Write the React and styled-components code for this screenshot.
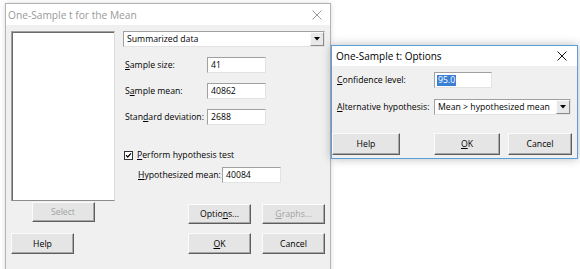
import React from "react";
import styled, { createGlobalStyle } from "styled-components";

const GlobalStyle = createGlobalStyle`
  html, body {
    margin: 0;
    padding: 0;
    background: #ffffff;
  }
  body {
    font-family: "Open Sans", "Liberation Sans", sans-serif;
    font-size: 8.7px;
    color: #000;
  }
`;

const Desktop = styled.div`
  position: relative;
  width: 580px;
  height: 269px;
  overflow: hidden;
  background: #ffffff;
`;

// a window sitting on the desktop
const Window = styled.div`
  position: absolute;
  left: ${(p) => p.$x}px;
  top: ${(p) => p.$y}px;
  width: ${(p) => p.$w}px;
  height: ${(p) => p.$h}px;
  box-sizing: border-box;
  display: flex;
  flex-direction: column;
  border: 1px solid ${(p) => (p.$active ? "#5a9ee0" : "#b4b4b4")};
  background: #f0f0f0;
  box-shadow: 0 0 ${(p) => (p.$active ? 9 : 5)}px rgba(0, 0, 0, ${(p) => (p.$active ? 0.28 : 0.15)});
`;

const TitleBar = styled.div`
  height: ${(p) => p.$h}px;
  flex: none;
  display: flex;
  align-items: center;
  justify-content: space-between;
  padding: 0 ${(p) => p.$pr}px 0 ${(p) => p.$pl}px;
  background: #ffffff;
  color: ${(p) => (p.$active ? "#000" : "#9a9a9a")};
  font-size: ${(p) => p.$size}px;
`;

const CloseX = ({ color }) => (
  <svg width="10" height="10" viewBox="0 0 10 10">
    <path d="M0.5 0.5 L9.5 9.5 M9.5 0.5 L0.5 9.5" stroke={color} strokeWidth="1" fill="none" />
  </svg>
);

const MainBody = styled.div`
  flex: 1;
  display: flex;
  flex-direction: column;
  padding: 6px 5px 0 5px;
`;

const TopArea = styled.div`
  display: flex;
  gap: 8px;
`;

const LeftCol = styled.div`
  width: 104px;
  display: flex;
  flex-direction: column;
`;

const ListBox = styled.div`
  height: 170px;
  box-sizing: border-box;
  background: #ffffff;
  border: 1px solid;
  border-color: #a0a0a0 #dcdcdc #8c8c8c #a0a0a0;
  box-shadow: inset 1px 1px 0 #6b6b6b;
`;

const RightCol = styled.div`
  width: 202px;
  display: flex;
  flex-direction: column;
`;

const Combo = styled.div`
  width: ${(p) => p.$w}px;
  height: 16px;
  box-sizing: border-box;
  display: flex;
  align-items: center;
  justify-content: space-between;
  background: #ffffff;
  border: 1px solid;
  border-color: #a0a0a0 #e3e3e3 #e3e3e3 #a0a0a0;
  padding-left: 3px;
`;

const ComboArrow = styled.span`
  width: 14px;
  height: 14px;
  box-sizing: border-box;
  display: flex;
  align-items: center;
  justify-content: center;
  background: #e8e8e8;
  border: 1px solid;
  border-color: #fafafa #8a8a8a #8a8a8a #fafafa;
`;

const Caret = () => (
  <svg width="6" height="4" viewBox="0 0 6 4">
    <path d="M0 0 H6 L3 3.5 Z" fill="#000" />
  </svg>
);

const FieldRow = styled.div`
  display: flex;
  align-items: center;
  margin-top: ${(p) => p.$mt || 0}px;
  padding-left: ${(p) => p.$pl || 0}px;
`;

const Label = styled.span`
  width: ${(p) => p.$w}px;
  flex: none;
  white-space: nowrap;
`;

const TextBox = styled.div`
  width: ${(p) => p.$w}px;
  height: 16px;
  box-sizing: border-box;
  display: flex;
  align-items: center;
  padding-left: ${(p) => p.$pl || 3}px;
  background: #ffffff;
  border: 1px solid;
  border-color: #a0a0a0 #e3e3e3 #e3e3e3 #a0a0a0;
`;

const Selected = styled.span`
  background: #3a7fd6;
  color: #ffffff;
  padding: 0 1px;
  line-height: 11px;
`;

const Key = styled.u`
  text-decoration-thickness: 1px;
  text-underline-offset: 1px;
`;

const CheckRow = styled.label`
  display: flex;
  align-items: center;
  gap: 4px;
  margin-top: ${(p) => p.$mt}px;
  height: 12px;
  padding-left: 1px;
`;

const CheckBox = () => (
  <svg width="9" height="9" viewBox="0 0 9 9">
    <rect x="0.5" y="0.5" width="8" height="8" fill="#fff" stroke="#333" />
    <path d="M2 4.2 L3.7 6 L7 2.4" stroke="#000" strokeWidth="1.2" fill="none" />
  </svg>
);

const ButtonRow = styled.div`
  display: flex;
  justify-content: ${(p) => p.$justify || "space-between"};
  margin-top: ${(p) => p.$mt || 0}px;
  padding-right: ${(p) => p.$pr || 0}px;
`;

const ButtonGroup = styled.div`
  display: flex;
  gap: ${(p) => p.$gap}px;
`;

const Button = styled.div`
  width: ${(p) => p.$w}px;
  height: ${(p) => p.$h}px;
  box-sizing: border-box;
  display: flex;
  align-items: center;
  justify-content: center;
  align-self: ${(p) => p.$self || "auto"};
  margin-top: ${(p) => p.$mt || 0}px;
  background: #e5e5e5;
  color: ${(p) => (p.$disabled ? "#a3a3a3" : "#000")};
  border: 1px solid;
  border-color: #fbfbfb #5e5e5e #5e5e5e #fbfbfb;
  box-shadow: inset -1px -1px 0 #a8a8a8;
`;

const OptionsBody = styled.div`
  flex: 1;
  display: flex;
  flex-direction: column;
  padding-top: 6px;
`;

export default function App() {
  return (
    <>
      <GlobalStyle />
      <Desktop>
        <Window $x={5} $y={3} $w={326} $h={290}>
          <TitleBar $h={21} $pl={2} $pr={8} $size={10.2}>
            <span>One-Sample t for the Mean</span>
            <CloseX color="#9a9a9a" />
          </TitleBar>
          <MainBody>
            <TopArea>
              <LeftCol>
                <ListBox />
                <Button $w={63} $h={20} $mt={1} $self="center" $disabled>
                  Select
                </Button>
              </LeftCol>
              <RightCol>
                <Combo $w={202}>
                  Summarized data
                  <ComboArrow>
                    <Caret />
                  </ComboArrow>
                </Combo>
                <FieldRow $mt={10} $pl={2}>
                  <Label $w={82}>
                    <Key>S</Key>ample size:
                  </Label>
                  <TextBox $w={59}>41</TextBox>
                </FieldRow>
                <FieldRow $mt={10} $pl={2}>
                  <Label $w={82}>
                    S<Key>a</Key>mple mean:
                  </Label>
                  <TextBox $w={59}>40862</TextBox>
                </FieldRow>
                <FieldRow $mt={10} $pl={2}>
                  <Label $w={82}>
                    Stan<Key>d</Key>ard deviation:
                  </Label>
                  <TextBox $w={59}>2688</TextBox>
                </FieldRow>
                <CheckRow $mt={24}>
                  <CheckBox />
                  <span>
                    <Key>P</Key>erform hypothesis test
                  </span>
                </CheckRow>
                <FieldRow $mt={6} $pl={15}>
                  <Label $w={84}>
                    <Key>H</Key>ypothesized mean:
                  </Label>
                  <TextBox $w={59}>40084</TextBox>
                </FieldRow>
                <ButtonRow $mt={21} $justify="flex-end">
                  <ButtonGroup $gap={11}>
                    <Button $w={63} $h={20}>
                      Optio<Key>n</Key>s...
                    </Button>
                    <Button $w={63} $h={20} $disabled>
                      <Key>G</Key>raphs...
                    </Button>
                  </ButtonGroup>
                </ButtonRow>
              </RightCol>
            </TopArea>
            <ButtonRow $mt={9}>
              <Button $w={63} $h={21}>
                Help
              </Button>
              <ButtonGroup $gap={11}>
                <Button $w={63} $h={21}>
                  <Key>O</Key>K
                </Button>
                <Button $w={63} $h={21}>
                  Cancel
                </Button>
              </ButtonGroup>
            </ButtonRow>
          </MainBody>
        </Window>

        <Window $x={331} $y={45} $w={247} $h={114} $active>
          <TitleBar $h={20} $pl={4} $pr={10} $size={10} $active>
            <span>One-Sample t: Options</span>
            <CloseX color="#111" />
          </TitleBar>
          <OptionsBody>
            <FieldRow $pl={5}>
              <Label $w={97}>
                <Key>C</Key>onfidence level:
              </Label>
              <TextBox $w={58} $pl={2}>
                <Selected>95.0</Selected>
              </TextBox>
            </FieldRow>
            <FieldRow $mt={11} $pl={5}>
              <Label $w={97}>
                <Key>A</Key>lternative hypothesis:
              </Label>
              <Combo $w={137}>
                Mean &gt; hypothesized mean
                <ComboArrow>
                  <Caret />
                </ComboArrow>
              </Combo>
            </FieldRow>
            <ButtonRow $mt={18} $pr={5}>
              <Button $w={68} $h={22}>
                Help
              </Button>
              <ButtonGroup $gap={8}>
                <Button $w={66} $h={22}>
                  <Key>O</Key>K
                </Button>
                <Button $w={64} $h={22}>
                  Cancel
                </Button>
              </ButtonGroup>
            </ButtonRow>
          </OptionsBody>
        </Window>
      </Desktop>
    </>
  );
}
